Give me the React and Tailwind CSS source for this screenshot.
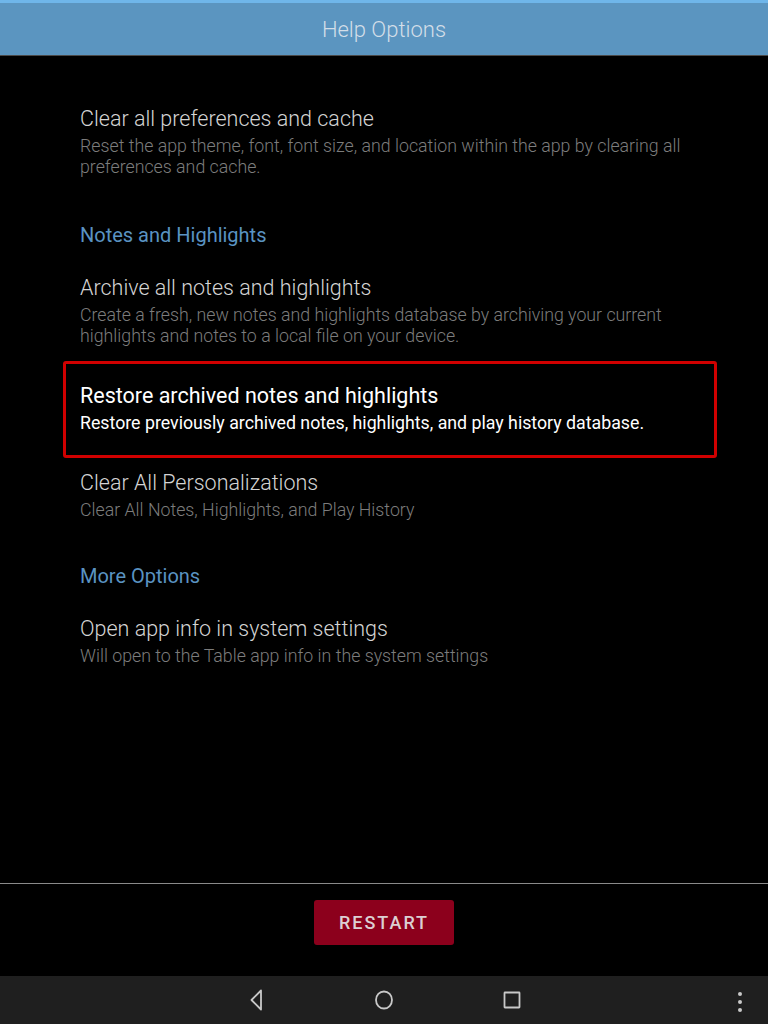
import React from 'react';

const items = [
  {
    title: 'Clear all preferences and cache',
    desc: 'Reset the app theme, font, font size, and location within the app by clearing all preferences and cache.',
  },
];

const OptionItem = ({ title, desc, active }) => (
  <div>
    <div className={`text-[21.5px] leading-[28px] ${active ? 'text-white font-normal' : 'text-[#d4d4d4] font-light'}`}>{title}</div>
    <div className={`mt-[3px] text-[17.75px] leading-[21px] ${active ? 'text-white font-normal' : 'text-[#7c7c7c] font-light'}`}>{desc}</div>
  </div>
);

const SectionHeader = ({ children, className = 'mt-[45px]' }) => (
  <div className={`${className} mb-[27px] text-[20px] leading-[24px] text-[#5a93c2]`}>{children}</div>
);

export default function App() {
  return (
    <div className="h-screen w-full bg-black flex flex-col overflow-hidden" style={{ fontFamily: 'Roboto, "Noto Sans", sans-serif' }}>
      {/* Header */}
      <div className="h-[3px] bg-[#6fb6ea]" />
      <div className="h-[53px] bg-[#5b95c0] border-b border-[#4a4a4a] flex items-center justify-center">
        <span className="text-[22px] font-light text-[#d3dee8]">Help Options</span>
      </div>

      {/* Options list */}
      <div className="flex-1 pl-[80px] pr-[80px] pt-[49px]">
        {items.map((it) => (
          <OptionItem key={it.title} {...it} />
        ))}

        <SectionHeader>Notes and Highlights</SectionHeader>
        <OptionItem
          title="Archive all notes and highlights"
          desc="Create a fresh, new notes and highlights database by archiving your current highlights and notes to a local file on your device."
        />

        <div className="mt-[14px] -ml-[17px] w-[654px] border-[3px] border-[#d00000] rounded-[3px] pl-[14px] pt-[18px] pb-[21px]">
          <OptionItem
            active
            title="Restore archived notes and highlights"
            desc="Restore previously archived notes, highlights, and play history database."
          />
        </div>

        <div className="mt-[11px]">
          <OptionItem title="Clear All Personalizations" desc="Clear All Notes, Highlights, and Play History" />
        </div>

        <SectionHeader className="mt-[43px]">More Options</SectionHeader>
        <OptionItem
          title="Open app info in system settings"
          desc="Will open to the Table app info in the system settings"
        />
      </div>

      {/* Footer */}
      <div className="border-t border-[#8a8a8a] h-[93px] flex justify-center pt-[16px]">
        <button className="h-[45px] w-[140px] rounded-[3px] bg-[#8c001c] text-[#dccfd2] text-[18px] font-medium tracking-[2px]">
          RESTART
        </button>
      </div>

      {/* Nav bar */}
      <div className="h-[48px] bg-[#1f1f1f] relative flex items-center justify-center gap-[104px] text-[#c8c8c8]">
        <svg width="24" height="24" viewBox="0 0 24 24" fill="none" stroke="currentColor" strokeWidth="1.8" strokeLinejoin="round">
          <path d="M17 2.5 L7.5 12 L17 21.5 Z" />
        </svg>
        <svg width="24" height="24" viewBox="0 0 24 24" fill="none" stroke="currentColor" strokeWidth="1.8">
          <ellipse cx="12" cy="12" rx="8" ry="8.5" />
        </svg>
        <svg width="24" height="24" viewBox="0 0 24 24" fill="none" stroke="currentColor" strokeWidth="1.8">
          <rect x="4.5" y="4.5" width="15" height="15" rx="0.5" />
        </svg>
        <div className="absolute right-[26px] top-[16px] flex flex-col gap-[4px]">
          <span className="block w-[4px] h-[4px] rounded-full bg-[#c8c8c8]" />
          <span className="block w-[4px] h-[4px] rounded-full bg-[#c8c8c8]" />
          <span className="block w-[4px] h-[4px] rounded-full bg-[#c8c8c8]" />
        </div>
      </div>
    </div>
  );
}
